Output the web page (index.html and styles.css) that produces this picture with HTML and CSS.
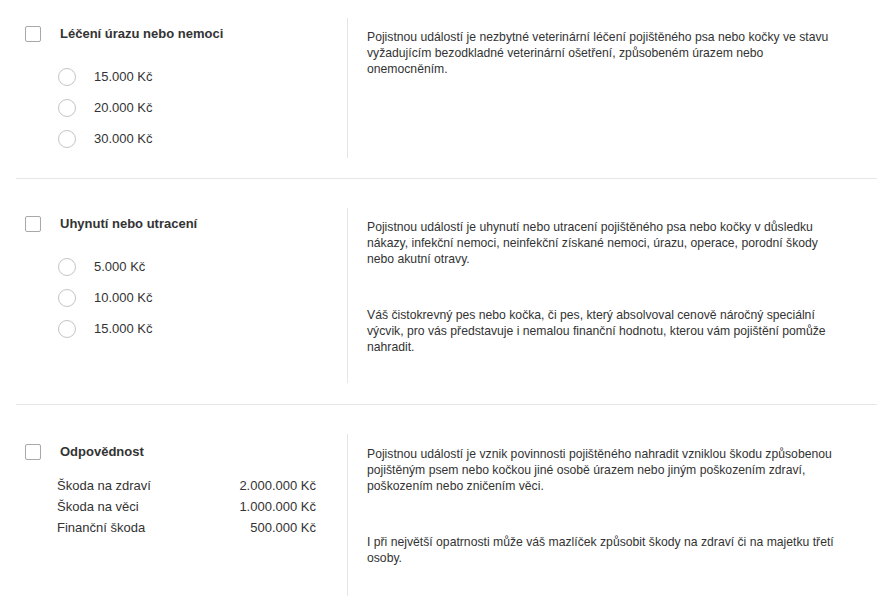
FILE: index.html
```html
<!DOCTYPE html>
<html lang="cs">
<head>
<meta charset="utf-8">
<title>Pojištění</title>
<link rel="stylesheet" href="styles.css">
</head>
<body>
<div class="page">
  <section class="cover cover-first">
    <div class="left">
      <label class="head"><span class="check"></span><span class="title">Léčení úrazu nebo nemoci</span></label>
      <ul class="radios">
        <li><span class="radio"></span><span>15.000 Kč</span></li>
        <li><span class="radio"></span><span>20.000 Kč</span></li>
        <li><span class="radio"></span><span>30.000 Kč</span></li>
      </ul>
    </div>
    <div class="right">
      <p>Pojistnou událostí je nezbytné veterinární léčení pojištěného psa nebo kočky ve stavu vyžadujícím bezodkladné veterinární ošetření, způsobeném úrazem nebo onemocněním.</p>
    </div>
  </section>
  <section class="cover">
    <div class="left">
      <label class="head"><span class="check"></span><span class="title">Uhynutí nebo utracení</span></label>
      <ul class="radios">
        <li><span class="radio"></span><span>5.000 Kč</span></li>
        <li><span class="radio"></span><span>10.000 Kč</span></li>
        <li><span class="radio"></span><span>15.000 Kč</span></li>
      </ul>
    </div>
    <div class="right">
      <p>Pojistnou událostí je uhynutí nebo utracení pojištěného psa nebo kočky v důsledku nákazy, infekční nemoci, neinfekční získané nemoci, úrazu, operace, porodní škody nebo akutní otravy.</p>
      <p>Váš čistokrevný pes nebo kočka, či pes, který absolvoval cenově náročný speciální výcvik, pro vás představuje i nemalou finanční hodnotu, kterou vám pojištění pomůže nahradit.</p>
    </div>
  </section>
  <section class="cover cover-last">
    <div class="left">
      <label class="head"><span class="check"></span><span class="title">Odpovědnost</span></label>
      <dl class="limits">
        <div class="limit"><dt>Škoda na zdraví</dt><dd>2.000.000 Kč</dd></div>
        <div class="limit"><dt>Škoda na věci</dt><dd>1.000.000 Kč</dd></div>
        <div class="limit"><dt>Finanční škoda</dt><dd>500.000 Kč</dd></div>
      </dl>
    </div>
    <div class="right">
      <p>Pojistnou událostí je vznik povinnosti pojištěného nahradit vzniklou škodu způsobenou pojištěným psem nebo kočkou jiné osobě úrazem nebo jiným poškozením zdraví, poškozením nebo zničením věci.</p>
      <p>I při největší opatrnosti může váš mazlíček způsobit škody na zdraví či na majetku třetí osoby.</p>
    </div>
  </section>
</div>
</body>
</html>
```

FILE: styles.css
```css
* { box-sizing: border-box; }
html, body { margin: 0; padding: 0; background: #fff; }
body {
  font-family: "Liberation Sans", Arial, sans-serif;
  color: #333;
}
.page {
  padding: 0 18px 0 16px;
}
.cover {
  display: flex;
  padding: 29px 0 21px;
  border-bottom: 1px solid #e6e6e6;
}
.cover-first { padding-top: 18px; padding-bottom: 20px; }
.cover-last { border-bottom: none; padding-top: 29px; padding-bottom: 12px; }
.left {
  width: 331px;
  flex: none;
  padding: 8px 0 4px 9px;
}
.cover-last .left { padding-top: 10px; }
.head {
  display: flex;
  align-items: center;
  height: 16px;
}
.check {
  width: 16px;
  height: 16px;
  border: 1px solid #a8a8a8;
  border-radius: 2px;
  background: #fff;
  flex: none;
}
.title {
  margin-left: 19px;
  font-size: 13px;
  font-weight: bold;
  color: #333;
  line-height: 16px;
}
.radios {
  list-style: none;
  margin: 19px 0 0;
  padding: 0 0 0 33px;
}
.radios li {
  display: flex;
  align-items: center;
  height: 31px;
  font-size: 13px;
  color: #333;
}
.radio {
  width: 18px;
  height: 18px;
  border: 1px solid #c4c4c4;
  border-radius: 50%;
  margin-right: 18px;
  flex: none;
}
.limits {
  margin: 15px 0 0;
  padding: 0 31px 0 32px;
}
.limit {
  display: flex;
  justify-content: space-between;
  height: 21px;
  line-height: 21px;
  font-size: 13px;
}
.limit dt, .limit dd { margin: 0; }
.right {
  flex: 1;
  border-left: 1px solid #e6e6e6;
  padding: 11px 40px 28px 19px;
}
.cover-last .right { padding-top: 12px; padding-bottom: 30px; }
.right p {
  margin: 0 0 40px;
  font-size: 12.2px;
  line-height: 16px;
  color: #333;
}
.right p:last-child { margin-bottom: 0; }
```
